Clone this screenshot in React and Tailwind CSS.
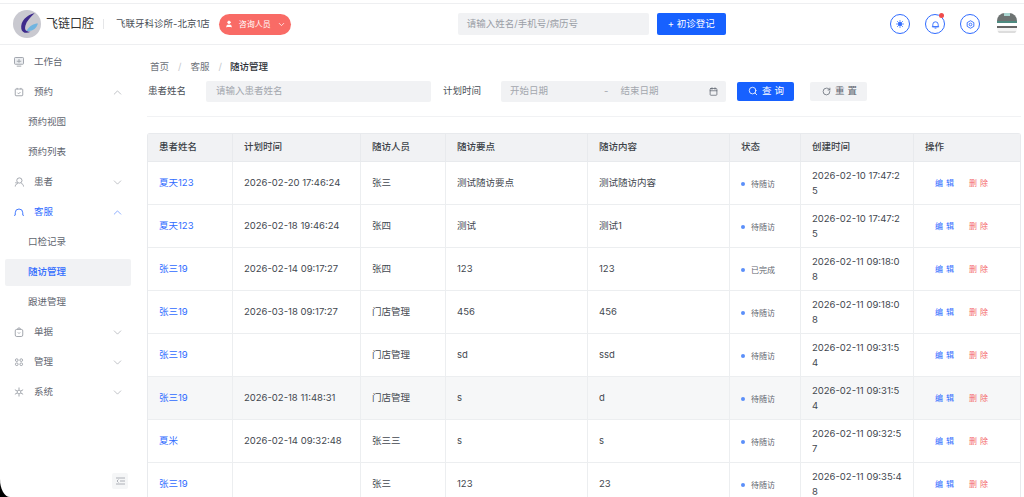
import { Search, RotateCw, ChevronDown, ChevronUp, Calendar, User } from 'lucide-react';

const font = { fontFamily: '"Inter", "Noto Sans CJK SC", sans-serif' };

const rows = [
  ['夏天123', '2026-02-20 17:46:24', '张三', '测试随访要点', '测试随访内容', '待随访', '2026-02-10 17:47:25'],
  ['夏天123', '2026-02-18 19:46:24', '张四', '测试', '测试1', '待随访', '2026-02-10 17:47:25'],
  ['张三19', '2026-02-14 09:17:27', '张四', '123', '123', '已完成', '2026-02-11 09:18:08'],
  ['张三19', '2026-03-18 09:17:27', '门店管理', '456', '456', '待随访', '2026-02-11 09:18:08'],
  ['张三19', '', '门店管理', 'sd', 'ssd', '待随访', '2026-02-11 09:31:54'],
  ['张三19', '2026-02-18 11:48:31', '门店管理', 's', 'd', '待随访', '2026-02-11 09:31:54', true],
  ['夏米', '2026-02-14 09:32:48', '张三三', 's', 's', '待随访', '2026-02-11 09:32:57'],
  ['张三19', '', '张三', '123', '23', '待随访', '2026-02-11 09:35:48'],
];

const cols = '[grid-template-columns:85px_128px_85px_142px_142px_71px_113px_108px]';

const MenuIcon = ({ kind }) => {
  const paths = {
    desk: <><rect x="2" y="2" width="12" height="9" rx="1" fill="#eceef1" /><path d="M8 4v5M5 7h6M5 13.500h6" /></>,
    cal: <><rect x="3" y="4" width="10" height="9" rx="1" /><path d="M5.500 2.500v2M10.500 2.500v2M6 9l1.500 1.500L10 8" /></>,
    user: <><circle cx="8.500" cy="6" r="3.500" /><path d="M3 14c0-2.500 2-4 3.500-4M14 14c0-2-1-3.500-3-4M3 9h2" /></>,
    service: <path d="M3 12V9a5 5 0 0 1 10 0v3M1.500 12.500h1.500M13 12.500h1.500" />,
    bill: <><path d="M3 6.500a2 2 0 0 1 2-2h6a2 2 0 0 1 2 2V12a2 2 0 0 1-2 2H5a2 2 0 0 1-2-2z" /><path d="M6 4.500a2 2 0 0 1 4 0M6.500 8.500L8 10l1.500-1.500" /></>,
    grid: <><circle cx="5" cy="5.500" r="1.800" /><circle cx="11" cy="5.500" r="1.800" /><circle cx="5" cy="11" r="1.800" /><circle cx="11" cy="11" r="1.800" /></>,
    gear: <><circle cx="8" cy="8" r="2.500" /><path d="M8 2v3M8 11v3M2.500 5l2.800 1.500M10.700 9.500L13.500 11M2.500 11l2.800-1.500M10.700 6.500L13.500 5" /></>,
  };
  return (
    <svg width="12" height="12" viewBox="0 0 16 16" fill="none" stroke="currentColor" strokeWidth="1.200">
      {paths[kind]}
    </svg>
  );
};

const MenuItem = ({ icon, label, open, active, hasArrow = true }) => (
  <div className={`h-[30px] flex items-center pl-[13px] pr-[23px] text-[9.500px] ${active ? 'text-[#2f6bff]' : 'text-[#5f6670]'}`}>
    <span className={`w-[21px] flex ${active ? 'text-[#2f6bff]' : 'text-[#9a9ea6]'}`}><MenuIcon kind={icon} /></span>
    <span className="flex-1">{label}</span>
    {hasArrow && (open
      ? <ChevronUp size={13} strokeWidth={1} className={active ? 'text-[#2f6bff]' : 'text-[#8b9098]'} />
      : <ChevronDown size={13} strokeWidth={1} className="text-[#8b9098]" />)}
  </div>
);

const SubItem = ({ label, active }) => (
  <div className="h-[30px] flex items-center pl-[5px] pr-[16px]">
    <div className={`w-full h-[27px] pl-[23px] flex items-center text-[9.500px] rounded-[2px] ${active ? 'bg-[#f1f2f4] text-[#2f6bff] font-medium' : 'text-[#5f6670]'}`}>
      {label}
    </div>
  </div>
);

const RoundIcon = ({ children, dot }) => (
  <div className="relative w-[20px] h-[20px] rounded-full border border-[#2f6bff] flex items-center justify-center text-[#2f6bff]">
    {children}
    {dot && <span className="absolute -top-[2px] right-0 w-[5px] h-[5px] rounded-full bg-[#f04b4b]" />}
  </div>
);

const Th = ({ children, last }) => (
  <div className={`flex items-center pl-[11px] text-[9.500px] text-[#3a3f46] font-medium ${last ? '' : 'border-r border-[#e8eaed]'}`}>{children}</div>
);

const Td = ({ children, color = 'text-[#42474f]', pad = 'pl-[11px]', className = '', last }) => (
  <div className={`flex items-center text-[9.500px] ${color} ${pad} ${last ? '' : 'border-r border-[#eceef0]'} ${className}`}>{children}</div>
);

export default function App() {
  return (
    <div style={font} className="relative w-[1024px] h-[497px] overflow-hidden bg-white flex flex-col">
      <header className="h-[42px] shrink-0 mt-[3px] border-t border-b border-[#eeeff1] flex items-center pl-[13px] pr-[7px]">
        <svg width="28" height="28" viewBox="0 0 27 27" className="shrink-0">
          <circle cx="13.500" cy="13.500" r="13.500" fill="#c9c9d0" />
          <path d="M21 3C13 5 7 11 8 18c.5 4 5 5 9 3-5 0-6-2-5-6 1-4 5-8 9-12z" fill="#3d2a8c" />
          <path d="M13 20c3-5 7-7 11-7-1 5-6 8-11 7z" fill="#6fb4e0" />
        </svg>
        <span className="ml-[5px] text-[12px] text-[#333]">飞链口腔</span>
        <span className="ml-[9px] w-px h-[10px] bg-[#e5e6e8]" />
        <span className="ml-[12px] text-[9.500px] text-[#4a4f57]">飞联牙科诊所-北京1店</span>
        <div className="ml-[9px] w-[72px] h-[21px] rounded-full bg-[#f96b66] text-white text-[8px] flex items-center pl-[6px] gap-[6px]">
          <User size={8} fill="white" />
          <span>咨询人员</span>
          <ChevronDown size={9} />
        </div>
        <div className="ml-[167px] w-[191px] h-[22px] rounded-[2px] bg-[#f1f2f4] flex items-center pl-[9px] text-[9.500px] text-[#9a9ea6]">请输入姓名/手机号/病历号</div>
        <button className="ml-[8px] w-[69px] h-[22px] rounded-[2px] bg-[#1761ff] text-white text-[9.500px]">+ 初诊登记</button>
        <div className="ml-auto flex items-center gap-[15px]">
          <RoundIcon>
            <svg width="8" height="8" viewBox="0 0 8 8" fill="currentColor"><circle cx="4" cy="4" r="2" /><path d="M4 0v8M0 4h8M1 1l6 6M7 1L1 7" stroke="currentColor" strokeWidth=".7" /></svg>
          </RoundIcon>
          <RoundIcon dot>
            <svg width="9" height="9" viewBox="0 0 10 10" fill="none" stroke="currentColor"><path d="M2 7.500V5a3 3 0 0 1 6 0v2.500zM1 7.500h8M4 9h2" /></svg>
          </RoundIcon>
          <RoundIcon>
            <svg width="9" height="9" viewBox="0 0 10 10" fill="none" stroke="currentColor"><path d="M5 .8l3.700 2.100v4.200L5 9.200 1.300 7.100V2.900z" /><circle cx="5" cy="5" r="1.500" /></svg>
          </RoundIcon>
          <div className="w-[20px] h-[23px] ml-[2px] flex flex-col rounded-[8px] overflow-hidden">
            <div className="h-[8px] bg-[#6d7372] flex justify-center"><span className="w-[6px] h-[3px] bg-[#a9d5d0]" /></div>
            <div className="h-[2px] bg-[#4e8a80]" />
            <div className="h-[3px] bg-white" />
            <div className="h-[2px] bg-[#666]" />
            <div className="h-[3px] bg-[#f4f4f4]" />
            <div className="h-[2px] bg-[#ddd]" />
          </div>
        </div>
      </header>
      <div className="flex-1 flex min-h-0">
        <aside className="relative w-[147px] shrink-0 pt-[2px]">
          <MenuItem icon="desk" label="工作台" hasArrow={false} />
          <MenuItem icon="cal" label="预约" open />
          <SubItem label="预约视图" />
          <SubItem label="预约列表" />
          <MenuItem icon="user" label="患者" />
          <MenuItem icon="service" label="客服" open active />
          <SubItem label="口检记录" />
          <SubItem label="随访管理" active />
          <SubItem label="跟进管理" />
          <MenuItem icon="bill" label="单据" />
          <MenuItem icon="grid" label="管理" />
          <MenuItem icon="gear" label="系统" />
          <div className="absolute left-[112px] top-[428px] w-4 h-4 rounded-[2px] bg-[#f5f6f7] flex items-center justify-center">
            <svg width="9" height="8" viewBox="0 0 9 8" stroke="#9a9ea6" strokeWidth=".8" fill="none"><path d="M0 1h9M4 4h5M0 7h9M2.500 2.500L1 4l1.500 1.500" /></svg>
          </div>
        </aside>
        <main className="flex-1 min-w-0 pr-[3px]">
          <div className="mt-[15px] h-[14px] pl-[3px] flex items-center gap-[9px] text-[9.500px] text-[#6d727a]">
            <span>首页</span>
            <span className="text-[#c5c8cc]">/</span>
            <span>客服</span>
            <span className="text-[#c5c8cc]">/</span>
            <span className="text-[#2b2f36] font-medium -ml-[1px]">随访管理</span>
          </div>
          <div className="mt-[6px] h-[22px] flex items-center text-[9.500px] text-[#4a4f57]">
            <span className="w-[59px] pl-[1px]">患者姓名</span>
            <div className="w-[225px] h-[21px] bg-[#f1f2f4] rounded-[2px] flex items-center pl-[10px] text-[#a3a7ae]">请输入患者姓名</div>
            <span className="ml-[12px] w-[58px]">计划时间</span>
            <div className="w-[225px] h-[21px] bg-[#f1f2f4] rounded-[2px] flex items-center pl-[9px] pr-[8px] text-[#a3a7ae]">
              <span>开始日期</span>
              <span className="ml-[56px]">-</span>
              <span className="ml-[12px] flex-1">结束日期</span>
              <Calendar size={9} className="text-[#5f6670]" />
            </div>
            <button className="ml-[11px] w-[57px] h-[19px] pl-[11px] bg-[#1761ff] text-white rounded-[2px] flex items-center gap-[4px]">
              <Search size={10} />
              <span className="tracking-[3px]">查询</span>
            </button>
            <button className="ml-[16px] w-[57px] h-[19px] pl-[12px] bg-[#f1f2f4] text-[#5f6670] rounded-[2px] flex items-center gap-[4px]">
              <RotateCw size={9} />
              <span className="tracking-[3px]">重置</span>
            </button>
          </div>
          <div className="mt-[14px] border-t border-[#f1f2f4]" />
          <div className="mt-[16px] border-l border-r border-t border-[#e8eaed] rounded-t-[3px]">
            <div className={`grid ${cols} h-[28px] bg-[#f1f2f4] border-b border-[#e8eaed]`}>
              <Th>患者姓名</Th>
              <Th>计划时间</Th>
              <Th>随访人员</Th>
              <Th>随访要点</Th>
              <Th>随访内容</Th>
              <Th>状态</Th>
              <Th>创建时间</Th>
              <Th last>操作</Th>
            </div>
            {rows.map((r, i) => (
              <div key={i} className={`grid ${cols} h-[43px] border-b border-[#eceef0] ${r[7] ? 'bg-[#f6f7f8]' : ''}`}>
                <Td color="text-[#2f6bff]">{r[0]}</Td>
                <Td>{r[1]}</Td>
                <Td>{r[2]}</Td>
                <Td>{r[3]}</Td>
                <Td>{r[4]}</Td>
                <Td>
                  <span className="flex items-center gap-[6px] mt-[2px] text-[8px] text-[#5f6670]">
                    <span className="w-[4px] h-[4px] rounded-full bg-[#5b8ff9]" />
                    {r[5]}
                  </span>
                </Td>
                <Td className="pr-[8px]">
                  <span className="leading-[15px] break-all">{r[6]}</span>
                </Td>
                <Td last pad="pl-[21px]" className="gap-[12px]">
                  <span className="text-[8px] text-[#2f6bff] tracking-[3px]">编辑</span>
                  <span className="text-[8px] text-[#f46a6a] tracking-[3px]">删除</span>
                </Td>
              </div>
            ))}
          </div>
        </main>
      </div>
      <div className="absolute left-0 bottom-0 w-[10px] h-[18px] bg-black">
        <div className="w-full h-full bg-white rounded-bl-[10px_18px]" />
      </div>
    </div>
  );
}
